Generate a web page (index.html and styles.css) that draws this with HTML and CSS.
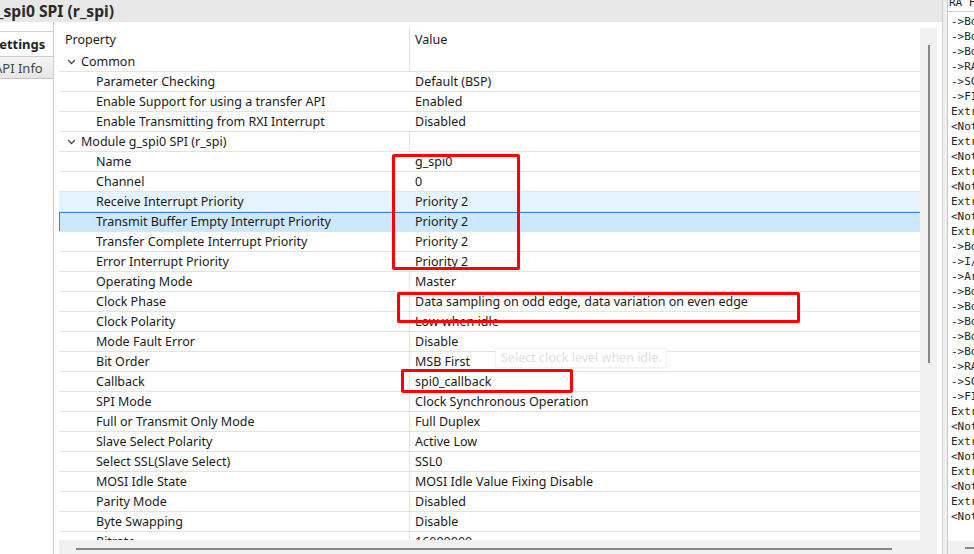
FILE: index.html
```html
<!DOCTYPE html>
<html>
<head>
<meta charset="utf-8">
<link rel="stylesheet" href="styles.css">
</head>
<body>
<div class="app">
  <div class="editor">
    <div class="title">_spi0 SPI (r_spi)</div>
    <div class="content">
      <div class="tabs">
        <div class="tab-top"></div>
        <div class="tab tab-active"><span class="clip-s">Settings</span></div>
        <div class="tab tab-inactive"><span class="clip-a">API Info</span></div>
      </div>
      <div class="main">
        <div class="grid-area">
          <div class="table">
            <div class="row head"><div class="p">Property</div><div class="v">Value</div></div>
            <div class="row cat"><div class="p"><svg class="chev" width="9" height="6" viewBox="0 0 9 6"><polyline points="1,1 4.5,4.5 8,1" fill="none" stroke="#4a4a4a" stroke-width="1.3"/></svg>Common</div><div class="v"></div></div>
            <div class="row nodiv"><div class="p">Parameter Checking</div><div class="v">Default (BSP)</div></div>
            <div class="row nodiv"><div class="p">Enable Support for using a transfer API</div><div class="v">Enabled</div></div>
            <div class="row nodiv"><div class="p">Enable Transmitting from RXI Interrupt</div><div class="v">Disabled</div></div>
            <div class="row cat"><div class="p"><svg class="chev" width="9" height="6" viewBox="0 0 9 6"><polyline points="1,1 4.5,4.5 8,1" fill="none" stroke="#4a4a4a" stroke-width="1.3"/></svg>Module g_spi0 SPI (r_spi)</div><div class="v"></div></div>
            <div class="row nodiv"><div class="p">Name</div><div class="v">g_spi0</div></div>
            <div class="row nodiv"><div class="p">Channel</div><div class="v">0</div></div>
            <div class="row nodiv hover"><div class="p">Receive Interrupt Priority</div><div class="v">Priority 2</div></div>
            <div class="row nodiv selected"><div class="p">Transmit Buffer Empty Interrupt Priority</div><div class="v">Priority 2</div></div>
            <div class="row nodiv"><div class="p">Transfer Complete Interrupt Priority</div><div class="v">Priority 2</div></div>
            <div class="row nodiv"><div class="p">Error Interrupt Priority</div><div class="v">Priority 2</div></div>
            <div class="row"><div class="p">Operating Mode</div><div class="v">Master</div></div>
            <div class="row"><div class="p">Clock Phase</div><div class="v">Data sampling on odd edge, data variation on even edge</div></div>
            <div class="row"><div class="p">Clock Polarity</div><div class="v">Low when idle</div></div>
            <div class="row"><div class="p">Mode Fault Error</div><div class="v">Disable</div></div>
            <div class="row"><div class="p">Bit Order</div><div class="v">MSB First</div></div>
            <div class="row"><div class="p">Callback</div><div class="v">spi0_callback</div></div>
            <div class="row"><div class="p">SPI Mode</div><div class="v">Clock Synchronous Operation</div></div>
            <div class="row"><div class="p">Full or Transmit Only Mode</div><div class="v">Full Duplex</div></div>
            <div class="row"><div class="p">Slave Select Polarity</div><div class="v">Active Low</div></div>
            <div class="row"><div class="p">Select SSL(Slave Select)</div><div class="v">SSL0</div></div>
            <div class="row"><div class="p">MOSI Idle State</div><div class="v">MOSI Idle Value Fixing Disable</div></div>
            <div class="row"><div class="p">Parity Mode</div><div class="v">Disabled</div></div>
            <div class="row"><div class="p">Byte Swapping</div><div class="v">Disable</div></div>
            <div class="row"><div class="p">Bitrate</div><div class="v">16000000</div></div>
          </div>
          <div class="vscroll"><div class="vthumb"></div></div>
        </div>
        <div class="hscroll"><div class="hthumb"></div></div>
      </div>
    </div>
  </div>
  <div class="sash"></div>
  <div class="console">
    <div class="console-head"><span>RA FSP</span></div>
    <div class="console-body">
      <div>-&gt;Board</div><div>-&gt;Board</div><div>-&gt;Board</div><div>-&gt;RA Common</div><div>-&gt;SCI</div><div>-&gt;FIT</div>
      <div>Extra</div><div>&lt;Note</div><div>Extra</div><div>&lt;Note</div><div>Extra</div><div>&lt;Note</div><div>Extra</div><div>&lt;Note</div><div>Extra</div>
      <div>-&gt;Board</div><div>-&gt;I/O</div><div>-&gt;Arm</div><div>-&gt;Board</div><div>-&gt;Board</div><div>-&gt;Board</div><div>-&gt;Board</div><div>-&gt;Board</div><div>-&gt;RA Common</div><div>-&gt;SCI</div><div>-&gt;FIT</div>
      <div>Extra</div><div>&lt;Note</div><div>Extra</div><div>&lt;Note</div><div>Extra</div><div>&lt;Note</div><div>Extra</div><div>&lt;Note</div>
    </div>
    <div class="console-scroll"><div class="cthumb"></div></div>
  </div>
</div>
<div class="tooltip">Select clock level when idle.</div>
<div class="mark mark-1"></div>
<div class="mark mark-2"></div>
<div class="mark mark-3"></div>
</body>
</html>
```
FILE: styles.css
```css
* { box-sizing: border-box; }
html, body { margin: 0; padding: 0; }
body {
  width: 974px;
  height: 554px;
  overflow: hidden;
  position: relative;
  background: #fff;
  font-family: "Noto Sans", "Liberation Sans", sans-serif;
  font-size: 12.5px;
  color: #1a1a1a;
}
.app { display: flex; height: 554px; }
.editor {
  width: 943px;
  display: flex;
  flex-direction: column;
  border-right: 1px solid #d0d0d0;
}
.title {
  height: 22px;
  background: #e8e8e8;
  font-weight: bold;
  font-size: 15.7px;
  line-height: 22px;
  text-indent: -3px;
  white-space: nowrap;
  overflow: hidden;
  color: #2a2a2a;
}
.content { flex: 1; display: flex; min-height: 0; }
.tabs {
  width: 54px;
  border-right: 1px solid #cfcfcf;
  display: flex;
  flex-direction: column;
  overflow: hidden;
}
.tab-top { height: 10px; border-bottom: 1px solid #d2d2d2; }
.tab { white-space: nowrap; overflow: hidden; font-size: 13px; }
.tab-active { height: 24px; line-height: 25px; font-weight: bold; color: #222; }
.tab-inactive {
  height: 23px;
  line-height: 22px;
  color: #444;
  border-top: 1px solid #cccccc;
  border-bottom: 1px solid #c4c4c4;
  background: linear-gradient(#f6f6f6, #e6e6e6);
}
.clip-s { margin-left: -8px; }
.clip-a { margin-left: -6px; }
.main {
  flex: 1;
  display: flex;
  flex-direction: column;
  padding: 6px 5px 0 5px;
  min-width: 0;
}
.grid-area { display: flex; height: 512px; }
.table { width: 861px; overflow: hidden; background: #fff; }
.row {
  display: grid;
  grid-template-columns: 350px 1fr;
  height: 20px;
  line-height: 19px;
  border-bottom: 1px solid #e3e3e3;
  white-space: nowrap;
}
.row .p { padding-left: 37px; overflow: hidden; }
.row .v { padding-left: 5px; border-left: 1px solid #e3e3e3; overflow: hidden; }
.row.head { height: 24px; line-height: 23px; border-bottom: none; }
.row.head .p { padding-left: 6px; }
.row.cat .p { padding-left: 8px; display: flex; align-items: center; }
.chev { margin-right: 5px; flex: none; }
.row.nodiv .v { border-left-color: transparent; }
.row.hover { background: #e5f3fe; }
.row.selected { background: #cce8ff; box-shadow: inset 1px 1px 0 #2e87d6; }
.vscroll { width: 17px; background: #f0f0f0; padding-top: 17px; }
.vthumb { width: 2px; height: 318px; margin-left: 8px; background: #868686; }
.hscroll { height: 14px; width: 878px; background: #f0f0f0; padding-top: 8px; }
.hthumb { height: 2px; width: 816px; margin-left: 17px; background: #868686; }
.sash { width: 4px; background: #efefef; }
.console {
  flex: 1;
  min-width: 0;
  border-left: 1px solid #c8c8c8;
  display: flex;
  flex-direction: column;
  font-family: "DejaVu Sans Mono", "Liberation Mono", monospace;
  font-size: 11px;
  color: #222;
  overflow: hidden;
}
.console-head {
  height: 12px;
  border-bottom: 1px solid #cfcfcf;
  white-space: nowrap;
  overflow: hidden;
  line-height: 12px;
  padding-left: 1px;
}
.console-head span { display: block; margin-top: -3px; }
.console-body {
  flex: 1;
  padding: 2px 0 0 3px;
  line-height: 15px;
  white-space: nowrap;
  overflow: hidden;
}
.console-scroll { height: 13px; background: #f0f0f0; padding-top: 6px; }
.cthumb { height: 2px; margin-left: 17px; background: #868686; }
.tooltip {
  position: absolute;
  left: 495px;
  top: 348px;
  width: 172px;
  height: 20px;
  padding-left: 5px;
  line-height: 18px;
  background: rgba(255, 255, 255, 0.85);
  border: 1px solid rgba(0, 0, 0, 0.05);
  box-shadow: 0 1px 2px rgba(0, 0, 0, 0.04);
  color: #e0e0e0;
  white-space: nowrap;
}
.mark {
  position: absolute;
  border: 3px solid #ff0000;
  border-radius: 2px;
}
.mark-1 { left: 392px; top: 154px; width: 128px; height: 116px; }
.mark-2 { left: 397px; top: 292px; width: 403px; height: 31px; }
.mark-3 { left: 401px; top: 369px; width: 172px; height: 24px; }
```
